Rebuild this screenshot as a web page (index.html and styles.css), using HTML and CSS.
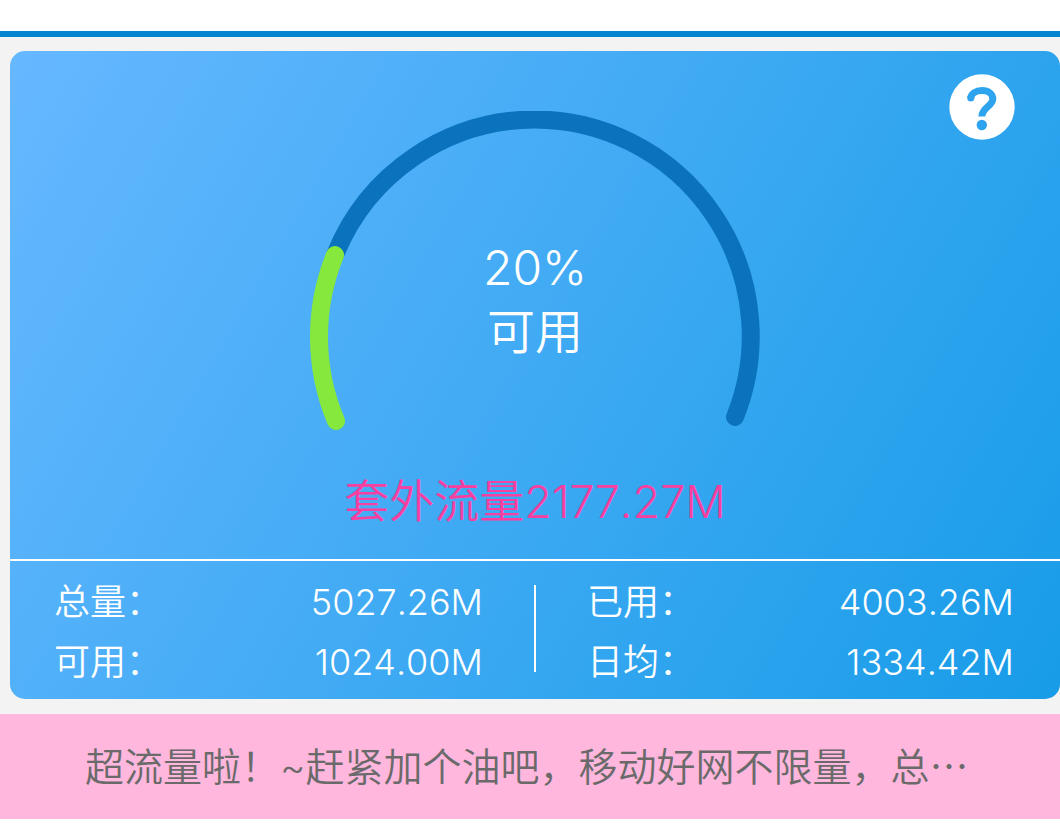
FILE: index.html
```html
<!DOCTYPE html>
<html lang="zh-CN">
<head>
    <meta charset="utf-8">
    <meta name="viewport" content="width=device-width, initial-scale=1">
    <title>流量查询</title>
    <link rel="stylesheet" href="styles.css">
</head>
<body>
    <header class="top-bar"></header>

    <main class="content">
        <section class="card">
            <button type="button" class="btn-help" aria-label="帮助">
                <svg viewBox="0 0 66 66" aria-hidden="true">
                    <circle cx="33" cy="33" r="32.7" fill="#fff"/>
                    <path d="M21.7 24.3C22.2 19.5 27 16.5 33 16.5C39.5 16.5 43.8 20 43.8 25C43.8 32 32.8 33.5 32.8 42.5" fill="none" stroke="#2fa4ee" stroke-width="7"/>
                    <circle cx="21.8" cy="24" r="3.5" fill="#2fa4ee"/>
                    <circle cx="32.8" cy="51" r="5.2" fill="#2fa4ee"/>
                </svg>
            </button>

            <div class="gauge">
                <svg class="gauge-ring" viewBox="0 0 450 320" aria-hidden="true">
                    <path class="ring-total" d="M25 144A216 216 0 0 1 225 8.5A216.5 216.5 0 0 1 425 306"/>
                    <path class="ring-left" d="M26 310A217 217 0 0 1 25 144"/>
                </svg>
                <div class="gauge-text">
                    <span>20%</span>
                    <span>可用</span>
                </div>
            </div>

            <p class="extra">套外流量2177.27M</p>

            <div class="stats">
                <dl class="stats-col">
                    <div class="stats-row"><dt>总量：</dt><dd>5027.26M</dd></div>
                    <div class="stats-row"><dt>可用：</dt><dd>1024.00M</dd></div>
                </dl>
                <div class="divider"></div>
                <dl class="stats-col">
                    <div class="stats-row"><dt>已用：</dt><dd>4003.26M</dd></div>
                    <div class="stats-row"><dt>日均：</dt><dd>1334.42M</dd></div>
                </dl>
            </div>
        </section>
    </main>

    <a href="#" class="notice">超流量啦！~赶紧加个油吧，移动好网不限量，总<span class="more">…</span></a>
</body>
</html>
```
FILE: styles.css
```css
* {
    margin: 0;
    padding: 0;
    box-sizing: border-box;
}

body {
    background: #fff;
    font-family: Inter, "Noto Sans CJK SC", sans-serif;
    font-weight: 350;
    font-kerning: none;
}

.top-bar {
    height: 37px;
    border-bottom: 6px solid #0585d0;
}

.content {
    padding: 14px 0 15px 10px;
    background: #f3f3f3;
}

.card {
    position: relative;
    padding-top: 60px;
    border-radius: 15px;
    background: linear-gradient(120deg, #66b8ff, #189ce8);
    color: #fff;
}

.btn-help {
    position: absolute;
    top: 23px;
    right: 45px;
    width: 66px;
    height: 66px;
    border: none;
    background: none;
    cursor: pointer;
}

.btn-help svg {
    display: block;
}

/* 流量圆环 */
.gauge {
    display: grid;
    justify-content: center;
}

.gauge-ring,
.gauge-text {
    grid-area: 1 / 1;
}

.gauge-ring {
    width: 450px;
    height: 320px;
}

.gauge-ring path {
    fill: none;
    stroke-width: 18px;
    stroke-linecap: round;
}

.gauge-ring .ring-total {
    stroke: #0b73bd;
}

.gauge-ring .ring-left {
    stroke: #86e83c;
}

.gauge-text {
    display: flex;
    flex-direction: column;
    align-items: center;
    padding-top: 125px;
    font-size: 48px;
    line-height: 64px;
}

.extra {
    padding: 39px 0 25px;
    color: #f93f9f;
    font-size: 45px;
    line-height: 64px;
    text-align: center;
}

.stats {
    display: grid;
    grid-template-columns: 1fr 2px 1fr;
    align-items: center;
    padding: 11px 0 7px;
    border-top: 2px solid #fff;
}

.stats-col {
    padding: 0 46px 0 51px;
}

.stats-col:first-child {
    padding: 0 51px 0 44px;
}

.stats-row {
    display: flex;
    justify-content: space-between;
    font-size: 36px;
    line-height: 60px;
}

.divider {
    height: 87px;
    margin-bottom: 7px;
    background: #fff;
}

.notice {
    display: block;
    padding: 23px 85px 22px;
    overflow: hidden;
    background: #ffb7dd;
    color: #6a6a6a;
    font-size: 39px;
    line-height: 60px;
    text-decoration: none;
    text-overflow: ellipsis;
    white-space: nowrap;
}

.notice .more {
    font-family: "Noto Sans CJK SC", sans-serif;
    line-height: 1;
}
```
